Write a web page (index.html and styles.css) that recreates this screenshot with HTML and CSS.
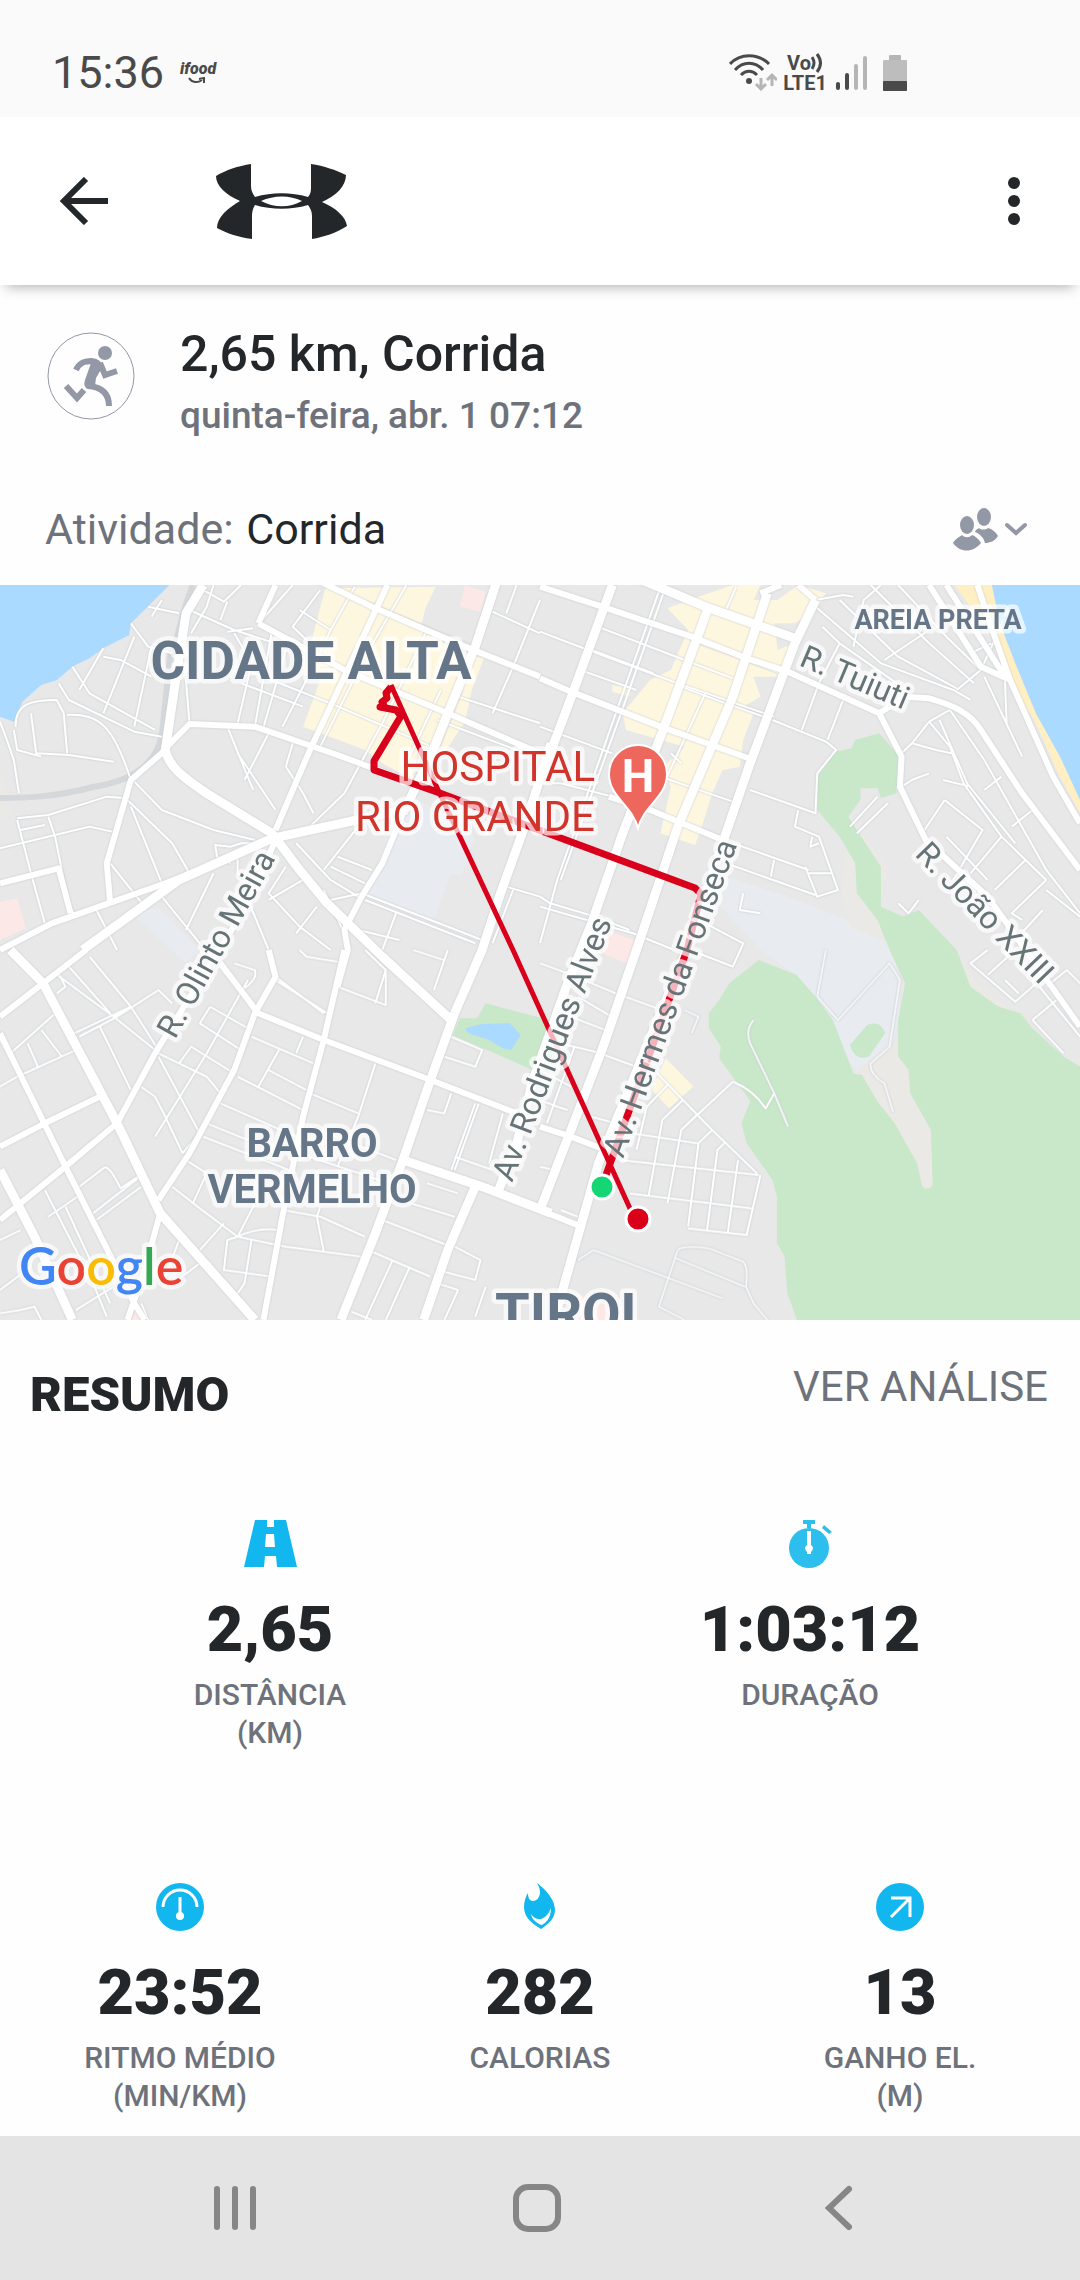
FILE: index.html
```
<!DOCTYPE html>
<html lang="pt-BR">
<head>
    <meta charset="UTF-8">
    <meta name="viewport" content="width=device-width, initial-scale=1.0">
    <title>2,65 km, Corrida</title>
    <link rel="stylesheet" href="styles.css">
</head>
<body>
    <!-- Status bar -->
    <div class="status-bar">
        <span class="clock">15:36</span>
        <span class="ifood">ifood
            <svg width="18" height="7" viewBox="0 0 18 7"><path d="M1 1 C4 6 10 6 14 3 M11 2 L16 1 L16 6" fill="none" stroke="currentColor" stroke-width="2"/></svg>
        </span>
        <div class="status-icons">
            <svg width="48" height="37" viewBox="0 0 48 37" fill="none" stroke="#4a4a4a" stroke-width="3">
                <path d="M1 10 C11 -1 29 -1 40 10 M6 16 C14 7 26 7 34 16 M12 21 C17 16 23 16 28 21"/>
                <circle cx="20" cy="27" r="3" fill="#4a4a4a" stroke="none"/>
                <path d="M32 24 V34 M27 30 L32 35 L37 30 M43 32 V22 M38 26 L43 21 L48 26" stroke="#b5b5b5"/>
            </svg>
            <div class="volte">
                <span>Vo<svg width="12" height="20" viewBox="0 0 12 20" fill="none" stroke="currentColor" stroke-width="3"><path d="M1 4 Q5 10 1 16 M6 1 Q13 10 6 19"/></svg></span>
                <span>LTE1</span>
            </div>
            <svg class="signal" width="32" height="36" viewBox="0 0 32 36">
                <rect x="0" y="27" width="4" height="8" rx="2" fill="#4a4a4a"/>
                <rect x="9" y="18" width="4" height="17" rx="2" fill="#4a4a4a"/>
                <rect x="18" y="9" width="4" height="26" rx="2" fill="#b5b5b5"/>
                <rect x="27" y="1" width="4" height="34" rx="2" fill="#b5b5b5"/>
            </svg>
            <svg class="battery" width="24" height="36" viewBox="0 0 24 36">
                <rect x="6" y="0" width="12" height="7" rx="1" fill="#b5b5b5"/>
                <rect x="0" y="5" width="24" height="31" rx="1" fill="#bdbdbd"/>
                <rect x="0" y="26" width="24" height="10" rx="1" fill="#4a4a4a"/>
            </svg>
        </div>
    </div>

    <header class="app-bar">
        <button class="icon-button" type="button" aria-label="Voltar">
            <svg width="48" height="48" viewBox="0 0 48 48" fill="none" stroke="#23272a" stroke-width="6"><path d="M48 24 H5 M26 2 L4 24 L26 46"/></svg>
        </button>
        <svg class="logo" width="131" height="75" viewBox="0 0 131 75" fill="#23272a" fill-rule="evenodd" role="img" aria-label="Under Armour">
            <path d="M0 12 C10 6 22 2 35 0 V22 C35 27 37 30 39 33 C56 28 75 28 92 33 C95 30 95 26 95 22 V0 C108 2 120 6 130 11 C130 22 120 32 106 38 C120 44 130 53 131 62 C120 69 108 73 96 75 V52 C96 47 94 44 92 41 C75 46 56 46 39 41 C36 46 36 50 36 54 V75 C22 73 10 69 1 64 C1 53 12 44 24 37 C10 31 0 22 0 12Z M45 37 C58 31 74 31 86 37 C74 44 58 44 45 37Z"/>
        </svg>
        <button class="icon-button menu-button" type="button" aria-label="Mais opções">
            <svg width="12" height="48" viewBox="0 0 12 48" fill="#23272a"><circle cx="6" cy="6" r="6"/><circle cx="6" cy="24" r="6"/><circle cx="6" cy="42" r="6"/></svg>
        </button>
    </header>

    <main>
        <section class="workout">
            <svg class="runner" width="88" height="88" viewBox="0 0 88 88" fill="none" stroke="#9398a6" stroke-width="6">
                <circle cx="44" cy="44" r="43" stroke-width="1"/>
                <circle cx="58" cy="21" r="7" fill="#9398a6" stroke="none"/>
                <path d="M29 38 C32 31 37 29 46 29"/>
                <path d="M40 27 Q52 24 56 34 L49 46 L48 54 L40 57 Q36 54 38 48 L44 31Z" fill="#9398a6" stroke="none"/>
                <path d="M53 31 L58 43 L70 39"/>
                <path d="M41 54 C54 55 62 61 62 74"/>
                <path d="M37 58 L30 66 L19 54"/>
            </svg>
            <div>
                <h1>2,65 km, Corrida</h1>
                <p class="date">quinta-feira, abr. 1 07:12</p>
            </div>
        </section>

        <section class="activity">
            <p>Atividade: <span class="activity-name">Corrida</span></p>
            <button class="icon-button privacy" type="button" aria-label="Privacidade">
                <svg width="45" height="43" viewBox="0 0 45 43" fill="#9398a6">
                    <ellipse cx="14" cy="17" rx="7" ry="9"/>
                    <path d="M0 35 C3 30 8 28 9 27 C12 30 16 30 19 27 C22 28 26 31 28 35 C20 45 7 45 0 35Z"/>
                    <ellipse cx="31" cy="9" rx="7" ry="9"/>
                    <path d="M22 24 C23 21 25 21 26 20 C28 22 33 22 35 20 C39 21 43 24 45 28 C42 33 37 35 32 35 C31 30 27 26 22 24Z"/>
                </svg>
                <svg width="22" height="14" viewBox="0 0 22 14" fill="none" stroke="#9398a6" stroke-width="4" stroke-linecap="round"><path d="M2 3 L11 11 L20 3"/></svg>
            </button>
        </section>

        <svg class="map" viewBox="0 0 1080 735" role="img" aria-label="Mapa do percurso">
            <!-- land use, left half then right half -->
            <g transform="translate(0 -5) scale(.3444 .3333)">
                <path class="water" d="M0 15 L492 15 L380 130 L375 165 L300 205 L260 235 L210 260 L165 300 L120 315 L65 365 L40 425 L0 410Z"/>
                <path class="dirt" d="M0 560 L30 700 L0 720Z"/>
                <path class="shops" d="M945 25 L1265 20 L1235 85 L1220 150 L1340 220 L1405 235 L1370 330 L1350 425 L1290 520 L1215 500 L1200 600 L1110 550 L1060 510 L880 440 L930 300 L880 285 L920 120Z"/>
                <path class="health" d="M1350 15 L1410 35 L1395 95 L1335 80Z M0 965 L50 955 L75 1045 L0 1080Z M395 2195 L375 2225 H415Z"/>
                <path class="campus" d="M1200 650 L1380 770 L1340 885 L1310 880 L1260 1020 L1065 945 L1130 750Z M385 1000 L460 985 L580 1110 L540 1150Z"/>
                <path class="park" d="M1410 1270 L1630 1330 L1590 1480 L1568 1480 L1315 1365 L1335 1315 L1385 1315Z"/>
                <path class="water" d="M1350 1345 L1400 1332 L1480 1330 L1512 1365 L1485 1410 L1460 1405 L1420 1380 L1360 1360Z"/>
            </g>
            <g transform="translate(540 -5) scale(.3444 .3333)">
                <path class="shops" d="M460 50 L560 15 H640 L620 60 L690 60 L750 15 L830 40 L800 90 L740 130 L680 130 L690 210 L740 190 L700 290 L620 290 L640 350 L590 380 L620 400 L590 480 L580 560 L530 570 L500 640 L470 740 L450 795 L350 760 L380 620 L360 560 L420 500 L250 450 L240 400 L320 300 L380 270 L430 150 L370 85Z M210 315 L265 325 L260 350 L210 335Z M365 1435 L445 1520 L375 1585 L325 1530Z"/>
                <path class="sand" d="M1205 15 H1312 L1340 130 L1380 250 L1440 400 L1510 530 L1568 650 V700 L1500 570 L1440 430 L1365 300 L1325 190 L1310 130 L1250 80Z"/>
                <path class="water" d="M1312 15 H1568 V660 L1510 530 L1440 400 L1380 250 L1335 130Z"/>
                <path class="health" d="M190 1050 L300 1090 L250 1150 L170 1115Z M100 2140 L300 2225 H80Z"/>
                <path class="campus" d="M540 890 L720 950 L870 1010 L1015 1080 L1045 1200 L1045 1310 L1020 1400 L930 1480 L900 1450 L850 1320 L800 1250 L745 1185 L640 1110 L500 950Z"/>
                <path class="dirt" d="M895 710 L1010 860 L990 980 L1055 1010 L1010 1090 L900 1040 L875 940Z M1025 1400 L1100 1420 L1180 1700 L1150 1840 L1080 1830 L900 1480Z M1200 1110 L1270 1210 L1568 1470 H1200Z"/>
                <path class="park" d="M985 460 L915 480 L905 505 L860 515 L805 590 L805 690 L870 770 L915 850 L920 940 L980 1020 L1015 1110 L1060 1210 L1040 1320 L1040 1430 L1070 1470 L1075 1540 L1135 1650 L1140 1815 Q1125 1835 1110 1820 L1095 1750 L1030 1630 L980 1565 L935 1485 L910 1480 L850 1320 L800 1250 L745 1185 L635 1140 L550 1210 L520 1260 L490 1300 L490 1345 L525 1400 L520 1435 L595 1540 L610 1565 L585 1630 L600 1690 L675 1800 L688 1850 L688 1990 L710 2030 L718 2140 L748 2225 H1568 V1460 L1520 1430 L1430 1345 L1395 1300 L1330 1280 L1250 1220 L1210 1110 L1100 990 L1055 1010 L990 980 L990 860 L895 710 L930 660 L930 625 L980 625 L990 655 L1035 640 L1040 525Z"/>
                <path class="park" d="M900 1395 L950 1335 Q990 1320 1002 1360 L955 1430 Q915 1445 900 1395Z"/>
            </g>

            <path class="railway" d="M193 0 C180 30 180 50 170 72 L162 148 C158 175 138 195 93 202 C52 213 20 213 0 213"/>

            <!-- side streets -->
            <g class="streets">
                <g transform="translate(0 -5) scale(.3444 .3333)">
                    <path d="M550 90 L680 150 L830 200 L1000 270 M620 15 L600 80 L555 160 M660 65 L640 120 M700 15 L650 65 L590 30 M850 15 L760 120 M930 30 L850 140 L900 190 M1030 20 L960 150 L890 300 L820 440 M870 90 L960 150 M660 155 L735 145 M680 160 L720 230 M540 300 L550 430 M740 210 L690 430 M790 150 L740 440 M830 210 L760 460"/>
                    <path d="M690 260 L960 370 L1300 520 M700 310 L880 380 M1180 15 L1060 230 L930 500 M1240 150 L1110 430 L1000 640 L900 740 M1280 330 L1180 550 M1340 330 L1250 560 M1000 40 L1370 200 M1430 95 L1568 160 M1500 15 L1470 100 M1568 60 L1490 260 L1430 400 M1330 350 L1568 430 M1270 420 L1500 510"/>
                    <path d="M660 440 L735 630 M780 460 L710 600 M850 490 L830 560 L880 640 L910 700 M690 520 L800 690 M390 605 L470 690 L620 750 L740 780 M370 660 L500 790 L550 880 M380 680 L470 910 M140 710 L160 770 L205 1000 M50 720 L90 880 L130 1030 M0 805 L260 740 L325 755 M50 715 L140 705 L310 650 L370 655 M60 750 L130 735"/>
                    <path d="M0 425 L20 480 L40 540 L55 640 M45 440 C45 370 90 360 165 360 L185 400 L195 520 M195 405 C290 400 330 440 380 600 M90 400 L105 520 L200 525 L330 545 M40 450 L50 510 L120 530 M170 310 L200 360 L390 455 L470 470 M210 260 L260 340 L450 450 M300 205 L230 330 M390 170 L300 400 M440 200 L390 440 M300 230 L350 240 L440 290 M380 130 L430 200 L500 220 M430 80 L520 100 M470 60 L440 110"/>
                    <path d="M740 790 L700 790 L670 800 L625 795 L630 830 L670 850 M690 830 L690 880 L720 900 M860 790 L960 900 L1040 950 M830 860 L780 940 L870 1040 L960 1110 M720 960 L780 1110 M980 830 L1080 870 M960 860 L1060 910 M1040 740 L940 870 M880 900 L780 960 M920 980 L860 1060 M960 960 L1050 940 L1400 1080 M1060 960 L1380 1090 M940 930 L1000 1060 M1000 1040 L1160 1080 M1150 1000 L1110 1110 M620 880 L540 1050 M470 950 L580 1090 M280 990 L340 1110 M320 850 L420 980 M1470 920 L1568 950 M1490 930 L1430 1090"/>
                </g>
                <g transform="translate(540 -5) scale(.3444 .3333)">
                    <path d="M350 20 L220 400 L50 900 L0 1090 M365 20 L235 400 L60 900 M0 155 L140 210 L400 310 L680 410 M180 145 L420 240 L560 295 M150 210 L330 280 M130 275 L280 330 M410 320 L540 370 L650 410 M480 340 L360 610 M380 520 L410 550 M0 440 L210 520 M350 590 L560 665 M600 240 L700 280 M440 180 L590 235 M570 20 L540 90 M0 610 L60 610 L210 650"/>
                    <path d="M810 310 L760 450 M880 360 L835 480 M675 420 L830 485 L860 510 L805 580 L800 700 L610 630 M750 690 L740 740 L810 770 L865 930 L805 950 L770 860 M790 770 L785 800 L810 790 M780 880 H850 M560 790 L780 870 M540 850 L800 945 M680 840 L670 890"/>
                    <path d="M800 80 L890 160 L990 250 L1200 330 L1250 360 M800 60 L880 45 L910 50 M870 60 L1040 230 L1210 325 M960 15 L1130 190 L1260 310 M1040 15 L1180 170 L1280 270 M910 200 L940 60 L990 15 M1000 240 L1130 150 M1210 330 L1280 270 L1320 180 M1250 220 L1310 190 M820 140 L870 190 L1050 320 M870 190 L810 310"/>
                    <path d="M1050 520 L1080 490 L1130 425 L1190 500 L1230 610 L1340 770 L1470 900 M1130 425 L1190 390 M1160 420 L1240 610 L1380 790 M1190 390 L1290 540 L1470 870 L1568 1000 M1050 620 L1080 600 L1130 580 M1080 490 L1150 510 L1195 520 M1170 600 L1250 620 M1175 660 L1285 750 L1200 900 M1110 760 L1175 660 M1180 770 L1300 900 M1340 770 L1250 880 M1410 840 L1320 930 M1470 900 L1370 1000 L1400 1020 M1290 630 L1340 590 M1370 740 L1430 690"/>
                    <path d="M1290 290 L1400 530 M1350 300 L1355 430 M1470 930 L1568 1010 M1380 1080 L1460 990 M0 950 L30 970 L160 1010 L260 1050 M0 980 L270 1060 L390 1110 M480 1030 L590 1090 L560 1160 L460 1120 M590 940 L580 990 L640 1000 M900 740 L980 650 M920 760 L1010 670 M1040 970 L1070 1000 L1100 960"/>
                </g>
                <g transform="translate(0 365) scale(.3444 .3333)">
                    <path d="M160 70 L330 200 L380 170 L260 20 M200 50 L320 190 M215 250 L380 170 M170 70 L190 110 L165 130 M220 300 L50 380 L0 410 M160 190 L30 310 M80 280 L110 350 M120 240 L180 320 M230 260 L340 200 L460 120 L500 160 M290 230 L380 420 M330 200 L450 300 M380 170 L460 300"/>
                    <path d="M460 310 L600 380 L640 430 M460 320 L580 550 L530 610 M520 340 L555 290 L680 370 M450 560 L600 310 L720 90 M610 170 L580 220 L700 300 M610 170 L720 235 M410 410 L450 440 L480 500 L530 610 M640 460 L860 560 M690 380 L880 480 M730 260 L910 340 M880 260 L860 310 M810 300 L750 410 M600 520 L720 570 M590 560 L840 660 M900 430 L1040 490 M1090 340 L1040 500 L980 650 M900 530 L1150 630 M780 360 L890 420 M840 600 L1130 700"/>
                    <path d="M800 90 L950 190 M800 80 L940 190 M870 0 L890 20 L980 35 M680 40 L740 60 Q750 90 700 120 M980 110 L1120 165 L1120 60 L1060 0 M1120 60 L1090 160 M1300 0 L1260 120 M1200 0 L1290 30 M1310 260 L1400 300 L1380 350 L1290 320 M1310 430 L1290 490 L1240 480 M1380 460 L1310 660 M1390 460 L1320 660 M1460 490 L1420 640 M1320 620 L1430 660 M1240 700 L1330 730 M1130 740 L1320 800"/>
                    <path d="M500 710 L580 775 L690 860 L830 890 L1050 920 M820 780 L930 800 L1060 860 M930 770 L920 800 L940 905 M690 860 L660 870 L650 960 L790 980 M690 860 L750 740 M650 820 L580 900 M690 860 Q750 830 810 840 M730 870 L710 1000 L690 1030 M540 630 L600 670 L560 760 M1110 810 L1310 890 M1080 905 L1250 980 M1140 930 L1060 1110 M1190 950 L1120 1110 M1320 890 L1395 930 L1380 990 L1270 960 M1330 1020 L1290 1110 M1270 1000 L1330 1020 M1020 1085 L1080 1110 M1410 1010 L1380 1100"/>
                    <path d="M230 710 L300 655 Q315 640 350 715 L400 680 M130 720 L270 1000 L310 1100 M190 770 L320 1060 M140 800 L225 740 M280 810 L410 710 M270 790 L400 685 M0 870 L60 840 M0 1020 L90 950 M0 1090 L60 1080 L100 1070 L120 1110 M520 870 L480 980 M580 940 L490 1010 M220 1080 L330 1010 M410 1060 L430 1110"/>
                </g>
                <g transform="translate(540 365) scale(.3444 .3333)">
                    <path d="M0 40 L80 70 L220 130 L340 175 M110 140 L200 195 M90 200 L190 240 M60 280 L160 305 L280 350 M100 290 L20 520 M0 360 L90 410 M150 500 L220 520 M0 450 L50 470 L80 480 M340 370 L490 530 L630 670 M460 490 L410 540 L370 760 M415 450 L355 510 L315 740 M560 395 L410 540 M500 540 L460 580 L430 830 M535 580 L515 600 L485 840 M575 630 L545 850 M640 675 L600 855 L430 835"/>
                    <path d="M270 550 L460 580 M230 630 L635 675 M260 730 L615 775 M370 405 L310 470 L280 600 M560 395 Q620 420 655 475 L680 430 M1300 0 L1250 40 L1380 155 L1440 100 M1350 90 L1390 130 M1430 210 L1520 310 M1430 210 L1500 150 M1450 110 L1568 260 M1300 75 L1380 0 M1470 110 L1530 60 L1568 100 M0 650 L40 660 M60 780 L110 800"/>
                    <path class="path" d="M620 210 Q595 240 610 280 L680 430 L720 530 M155 900 L530 1045 M400 900 Q415 885 490 895 L590 935 Q605 950 598 1010 L620 1060 L660 1110 M400 900 L345 1070 L420 1110 M395 925 L595 1010 M110 930 L155 900 M805 140 L865 210 L1015 40 L1045 90 L1015 290 L960 340 Q955 370 1000 400 L1025 485 M830 0 L805 140 M420 180 L460 200 L440 250"/>
                </g>
            </g>

            <!-- avenues -->
            <g class="avenues">
                <g transform="translate(0 -5) scale(.3444 .3333)">
                    <path class="wide" d="M590 15 L540 100 L510 300 L480 510 C490 560 530 590 600 640 L790 760 L870 870 L950 970 L1110 1130 L1310 1320"/>
                    <path d="M485 500 L550 432 L740 440 L980 525 L1280 640 L1568 750 M480 510 L380 600 L310 850 L320 970"/>
                    <path class="wide" d="M1450 -20 L1380 200 L1300 400 L1250 530 L1170 700"/>
                    <path d="M1170 700 L1110 850 L1050 950 L1000 1050 L1010 1110 L980 1220"/>
                    <path d="M1125 15 L1000 290 L900 510 L800 750 M880 -20 L1080 80 L1350 200 L1568 290 M750 130 L1000 270 L1300 400 L1568 520 M800 15 L750 130"/>
                    <path class="wide" d="M1600 490 L1530 720 L1450 950 L1400 1110 L1320 1300 M240 1110 L520 900 L790 775 L1170 690"/>
                    <path d="M0 1110 L150 1030 L480 910 L700 820 M0 910 L170 865 L205 1000"/>
                </g>
                <g transform="translate(0 365) scale(.3444 .3333)">
                    <path class="wide" d="M30 0 L125 100 L340 520 L465 790 L740 1110"/>
                    <path d="M0 200 L125 100 L250 0 M800 -330 L720 -140 L450 310 L340 520 L190 650 L0 810 M0 250 L190 650 L390 1060 L420 1110 M0 590 L130 520 L290 440 M780 0 L800 80 L740 190 L680 360 L550 610 L460 750 M640 40 L750 190 L940 270 L1250 390 L1500 490 M1000 0 L940 270 L880 500 L820 800 L765 1110 M465 790 L420 960 L370 1110"/>
                    <path class="wide" d="M0 660 L100 860 L210 1110 M1320 190 L1250 390 L1170 630 L1090 850 L990 1110 M1170 630 L1400 710 L1600 790 M1380 710 L1300 900 L1230 1110"/>
                </g>
                <g transform="translate(540 -5) scale(.3444 .3333)">
                    <path class="wide" d="M210 15 L180 100 L95 340 L0 600 M660 40 L560 350 L400 740 L290 1080 L180 1410 L0 1890 M800 60 L740 190 L610 550 L530 790 L430 1100 L170 1750 L40 2225 M250 -20 L480 80 L740 175"/>
                    <path class="wide" d="M490 80 L350 470 L240 760 L150 1030 L80 1210 L-20 1500 L-70 1700 L-120 1830"/>
                    <path d="M0 20 L180 80 L440 170 L600 235 L720 275 L985 400 L1050 530 L1045 620 L1120 780 L1300 950 L1568 1340 M0 295 L90 335 L350 440 L620 540 M200 650 L320 690 L530 780 M750 15 L800 60 M640 40 L700 15"/>
                    <path d="M985 400 L1060 350 L1130 355 C1200 375 1250 400 1280 450 L1400 640 L1568 870 M1270 15 L1310 140 L1365 300 L1490 590 L1568 730 M1130 15 L1280 260 L1365 300 M1180 15 L1350 290 M0 1640 L90 1670 L190 1710 M0 1890 L120 1940"/>
                </g>
            </g>

            <!-- recorded route -->
            <path class="route" d="M391 102 L386 108 L387 113 L382 117 L385 122 L380 122 L396 125 L401 131 L374 176 L374 185 L437 207 L695 303 L701 309 L687 365 L624 540 L606 590"/>
            <path class="route route-thin" d="M391 100 L439 207 L419 199 M439 207 L513 365 L632 628"/>

            <g class="labels">
                <g class="district" text-anchor="middle">
                    <text x="311" y="94" font-size="53">CIDADE ALTA</text>
                    <text x="938" y="44" font-size="27">AREIA PRETA</text>
                    <text x="312" y="572" font-size="40">BARRO</text>
                    <text x="312" y="618" font-size="40">VERMELHO</text>
                    <text x="573" y="748" font-size="56">TIROL</text>
                </g>
                <g class="hospital" text-anchor="end">
                    <text x="595" y="196">HOSPITAL</text>
                    <text x="595" y="246">RIO GRANDE</text>
                </g>
                <g class="street-name">
                    <text transform="translate(798 80) rotate(23)">R. Tuiuti</text>
                    <text transform="translate(914 270) rotate(46)">R. João XXIII</text>
                    <text transform="translate(175 455) rotate(-61)">R. Olinto Meira</text>
                    <text transform="translate(512 598) rotate(-69)">Av. Rodrigues Alves</text>
                    <text transform="translate(623 574) rotate(-70)">Av. Hermes da Fonseca</text>
                </g>
            </g>

            <path d="M638 243 C632 220 609 212 609 189 A29 29 0 0 1 667 189 C667 212 644 220 638 243Z" fill="#ee675c" stroke="#fff" stroke-width="2"/>
            <text class="pin-letter" x="638" y="207">H</text>

            <circle cx="602" cy="602" r="12" fill="#15d674" stroke="#fff" stroke-width="3"/>
            <circle cx="638" cy="634" r="12" fill="#db0019" stroke="#fff" stroke-width="3"/>

            <text class="google" x="19" y="700"><tspan fill="#4285f4">G</tspan><tspan fill="#ea4335">o</tspan><tspan fill="#fbbc05">o</tspan><tspan fill="#4285f4">g</tspan><tspan fill="#34a853">l</tspan><tspan fill="#ea4335">e</tspan></text>
        </svg>

        <section class="summary">
            <div class="summary-head">
                <h2>RESUMO</h2>
                <a href="#analise">VER ANÁLISE</a>
            </div>
            <div class="stats stats-two">
                <div class="stat">
                    <svg width="53" height="48" viewBox="0 0 53 48" fill="#13b7ef" fill-rule="evenodd"><path d="M11 0 H42 L53 47 H0Z M23 0 V7 H30 V0Z M22 14 L21 27 H31 L30 14Z M21 36 L20 47 H33 L32 36Z"/></svg>
                    <strong>2,65</strong>
                    <span>DISTÂNCIA<br>(KM)</span>
                </div>
                <div class="stat">
                    <svg width="44" height="48" viewBox="0 0 44 48" fill="#2cbfee">
                        <path d="M15 0 H27 V4 H23 V8 H19 V4 H15Z M36 5 L44 12 L41 14 L34 8Z"/>
                        <circle cx="21" cy="28" r="20"/>
                        <path d="M19 11 H23 V25 Q27 28 23 32 V34 H19 V32 Q15 28 19 25Z" fill="#fff"/>
                    </svg>
                    <strong>1:03:12</strong>
                    <span>DURAÇÃO</span>
                </div>
            </div>
            <div class="stats stats-three">
                <div class="stat">
                    <svg width="48" height="48" viewBox="0 0 48 48">
                        <circle cx="24" cy="24" r="24" fill="#13b7ef"/>
                        <path d="M7 24 A17 17 0 0 1 41 24 M24 14 V32" fill="none" stroke="#fff" stroke-width="3"/>
                        <circle cx="24" cy="33" r="4" fill="#fff"/>
                    </svg>
                    <strong>23:52</strong>
                    <span>RITMO MÉDIO<br>(MIN/KM)</span>
                </div>
                <div class="stat">
                    <svg width="32" height="48" viewBox="0 0 32 48">
                        <path d="M13 0 C20 5 31 16 31 27 C31 36 23 42 17 46 C9 41 0 35 0 24 C0 18 2 13 4 10 C4 14 5 18 9 18 C13 18 16 14 16 9 C16 5 14 2 13 0Z" fill="#13b7ef"/>
                        <path d="M7 31 C12 39 22 38 27 25 C27 36 21 41 17 42 C11 39 8 36 7 31Z" fill="#fff"/>
                    </svg>
                    <strong>282</strong>
                    <span>CALORIAS</span>
                </div>
                <div class="stat">
                    <svg width="48" height="48" viewBox="0 0 48 48">
                        <circle cx="24" cy="24" r="24" fill="#13b7ef"/>
                        <path d="M15 15 H34 V34 M34 15 L15 34" fill="none" stroke="#fff" stroke-width="3"/>
                    </svg>
                    <strong>13</strong>
                    <span>GANHO EL.<br>(M)</span>
                </div>
            </div>
        </section>
    </main>

    <nav class="nav-bar">
        <button type="button" aria-label="Recentes">
            <svg width="44" height="48" viewBox="0 0 44 48" stroke="#868686" stroke-width="6" stroke-linecap="round"><path d="M4 5 V43 M22 5 V43 M40 5 V43"/></svg>
        </button>
        <button type="button" aria-label="Início">
            <svg width="48" height="48" viewBox="0 0 48 48" fill="none" stroke="#868686" stroke-width="6"><rect x="3" y="3" width="42" height="42" rx="12"/></svg>
        </button>
        <button type="button" aria-label="Voltar">
            <svg width="28" height="48" viewBox="0 0 28 48" fill="none" stroke="#868686" stroke-width="6" stroke-linecap="round"><path d="M24 5 L4 24 L24 43"/></svg>
        </button>
    </nav>
</body>
</html>
```
FILE: styles.css
```
* {
    box-sizing: border-box;
}

body {
    margin: 0;
    min-height: 100vh;
    display: flex;
    flex-direction: column;
    background-color: #fefefe;
    color: #23272a;
    font-family: Roboto, "Liberation Sans", sans-serif;
}

h1, h2, p {
    margin: 0;
}

svg {
    display: block;
    flex-shrink: 0;
}

button {
    padding: 0;
    border: none;
    background: none;
    cursor: pointer;
}

/* status bar */
.status-bar {
    display: flex;
    align-items: center;
    height: 117px;
    padding: 28px 173px 0 52px;
    background-color: #fafafa;
    color: #4a4a4a;
}

.clock {
    font-size: 45px;
    line-height: 52px;
}

.ifood {
    margin-left: 16px;
    font-size: 16px;
    line-height: 16px;
    font-weight: 900;
    font-style: italic;
}

.ifood svg {
    margin-left: 8px;
}

.status-icons {
    display: flex;
    align-items: center;
    margin-left: auto;
}

.volte {
    display: flex;
    flex-direction: column;
    align-items: center;
    width: 44px;
    margin: 0 9px 0 6px;
    font-size: 20px;
    font-weight: 700;
    line-height: 20px;
}

.volte span {
    display: flex;
}

.battery {
    margin-left: 15px;
}

/* app bar */
.app-bar {
    display: flex;
    align-items: center;
    height: 168px;
    padding: 0 60px;
    background-color: #fff;
    box-shadow: 0 8px 12px -6px rgba(0, 0, 0, 0.3);
}

.logo {
    margin-left: 108px;
}

.menu-button {
    margin-left: auto;
}

/* workout title */
.workout {
    display: flex;
    gap: 45px;
    padding: 39px 47px 0;
}

.runner {
    margin-top: 8px;
}

h1 {
    font-size: 50px;
    font-weight: 500;
    line-height: 60px;
}

.date {
    color: #6e727a;
    font-size: 37px;
    font-weight: 500;
    line-height: 64px;
}

.activity {
    display: flex;
    align-items: center;
    justify-content: space-between;
    padding: 51px 53px 26px 45px;
    color: #6e727a;
    font-size: 43px;
    line-height: 60px;
}

.activity-name {
    margin-left: 2px;
    color: #23272a;
}

.privacy {
    display: flex;
    align-items: center;
    gap: 7px;
}

/* map */
.map {
    width: 100%;
    height: auto;
    background-color: #e8e8e8;
    overflow: hidden;
}

.water { fill: #aadaff; }
.park { fill: #c8e8c9; }
.shops { fill: #fef7e0; }
.sand { fill: #ffefc3; }
.health { fill: #fce8e6; }
.campus { fill: #e8ecf0; }
.dirt { fill: #ebe9e5; }

.railway {
    fill: none;
    stroke: #d5d8db;
    stroke-width: 6;
}

.streets path, .avenues path {
    fill: none;
    stroke: #fff;
    stroke-linejoin: round;
    vector-effect: non-scaling-stroke;
}

.streets, .avenues {
    filter: drop-shadow(0 0 1px #c3c8ce);
}

.streets path {
    stroke-width: 2;
}

.streets .path {
    stroke: #f4f5f6;
}

.avenues path {
    stroke-width: 6;
}

.avenues .wide {
    stroke-width: 9;
}

.route {
    fill: none;
    stroke: #d9001b;
    stroke-width: 7;
    stroke-linejoin: round;
}

.route-thin {
    stroke-width: 5;
}

.labels text, .google {
    paint-order: stroke;
    stroke: rgba(255, 255, 255, 0.7);
    stroke-width: 9px;
    stroke-linejoin: round;
}

.district {
    fill: #667689;
    font-weight: 700;
}

.hospital {
    fill: #d0342b;
    font-size: 42px;
}

.street-name {
    fill: #667478;
    font-size: 32px;
}

.pin-letter {
    fill: #fff;
    font-size: 46px;
    font-weight: 700;
    text-anchor: middle;
}

.google {
    font-family: Lato, sans-serif;
    font-size: 52px;
    font-weight: 600;
}

/* summary */
.summary-head {
    display: flex;
    align-items: flex-start;
    justify-content: space-between;
    padding: 37px 32px 0 30px;
}

h2 {
    padding-top: 8px;
    font-size: 49px;
    font-weight: 900;
    line-height: 60px;
}

.summary-head a {
    color: #6e727a;
    font-size: 42px;
    line-height: 60px;
    text-decoration: none;
}

.stats {
    display: grid;
    height: 363px;
}

.stats-two {
    grid-template-columns: repeat(2, 1fr);
    margin-top: 95px;
}

.stats-three {
    grid-template-columns: repeat(3, 1fr);
    height: auto;
}

.stat {
    display: flex;
    flex-direction: column;
    align-items: center;
    text-align: center;
}

.stat strong {
    margin-top: 22px;
    font-size: 63px;
    font-weight: 900;
    line-height: 80px;
}

.stat span {
    margin-top: 6px;
    color: #6e727a;
    font-size: 30px;
    font-weight: 500;
    line-height: 38px;
}

/* navigation bar */
.nav-bar {
    display: grid;
    grid-template-columns: repeat(3, 1fr);
    height: 144px;
    margin-top: auto;
    padding: 0 90px 0 84px;
    background-color: #e4e4e4;
}

.nav-bar button {
    display: flex;
    align-items: center;
    justify-content: center;
}
```
